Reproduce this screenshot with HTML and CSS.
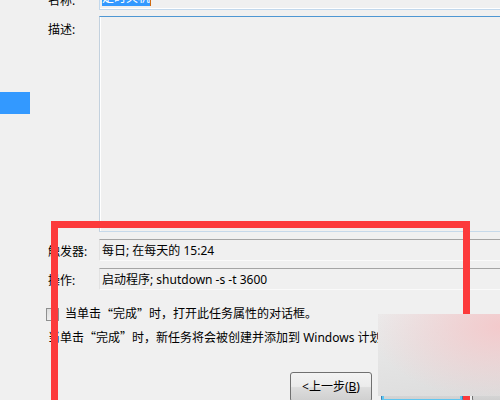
FILE: index.html
```html
<!DOCTYPE html>
<html>

<head>
    <title>创建基本任务向导 - 完成</title>
    <link rel="stylesheet" href="styles.css">
    <meta name="viewport" content="width=device-width, initial-scale=1">
</head>

<body>
    <div class="wizard">
        <nav class="steps">
            <div class="step current"></div>
        </nav>
        <main class="form">
            <div class="row name-row">
                <label class="label">名称:</label>
                <div class="field name-field"><span class="selected">定时关机</span><span class="caret"></span></div>
            </div>
            <div class="row desc-row">
                <label class="label">描述:</label>
                <div class="field textarea"></div>
            </div>
            <div class="row info-row">
                <label class="label">触发器:</label>
                <div class="field readonly">每日; 在每天的 15:24</div>
            </div>
            <div class="row info-row">
                <label class="label">操作:</label>
                <div class="field readonly">启动程序; shutdown -s -t 3600</div>
            </div>
            <label class="check"><span class="box"></span>当单击<span class="cjk">“</span>完成<span class="cjk">”</span>时，打开此任务属性的对话框。</label>
            <p class="note">当单击<span class="cjk">“</span>完成<span class="cjk">”</span>时，新任务将会被创建并添加到 Windows 计划程序中。</p>
            <div class="buttons">
                <button class="btn">&lt;上一步(<u>B</u>)</button>
                <button class="btn default">完成(<u>F</u>)</button>
                <button class="btn">取消</button>
            </div>
        </main>
    </div>
    <div class="annotation"></div>
    <div class="watermark"></div>
</body>

</html>
```

FILE: styles.css
```css
html,
body {
    margin: 0;
    width: 500px;
    height: 400px;
    overflow: hidden;
    background: #f0f0f0;
}

body {
    position: relative;
    font-family: "Noto Sans", "Noto Sans CJK SC", sans-serif;
    font-size: 12px;
    line-height: 16px;
    color: #000;
}

/* full-width quotes, as the CJK face draws them */
.cjk {
    font-family: "Noto Sans CJK SC", sans-serif;
}

.wizard {
    display: flex;
}

.steps {
    width: 30px;
    flex-shrink: 0;
}

.step.current {
    margin-top: 92px;
    height: 22px;
    background: #3399ff;
}

.form {
    margin-left: 18px;
    margin-top: -14px;
    width: 560px;
    display: flex;
    flex-direction: column;
}

.row {
    display: flex;
}

.label {
    width: 51px;
    flex-shrink: 0;
}

.field {
    flex: 1;
    box-sizing: border-box;
    padding: 3px 2px;
}

.name-row .label {
    padding-top: 7px;
}

.name-field {
    height: 24px;
    border: 1px solid #c2d8ec;
    border-top-color: #9fbcd8;
    box-shadow: inset 0 -1px #ffffff;
}

.selected {
    background: #3399ff;
    color: #fff;
}

.caret {
    display: inline-block;
    width: 1px;
    height: 16px;
    vertical-align: top;
    background: #d06a10;
}

.desc-row {
    margin-top: 6px;
}

.desc-row .label {
    padding-top: 6px;
}

.textarea {
    height: 216px;
    border: 1px solid #c6d9ea;
    border-top-color: #4f97d3;
    border-left-color: #c3d1de;
    box-shadow: inset 1px 0 #ffffff;
}

.info-row {
    margin-top: 7px;
}

.info-row .label {
    padding-top: 5px;
}

.readonly {
    height: 22px;
    border-top: 1px solid #a5a5a5;
    border-left: 1px solid #e2e2e2;
    border-bottom: 1px solid #fafafa;
}

.check {
    margin-top: 16px;
    margin-left: -2px;
    display: flex;
    align-items: center;
}

.box {
    width: 11px;
    height: 11px;
    margin-right: 6px;
    border: 1px solid #8e8f8f;
    background: linear-gradient(135deg, #dcdcdc, #fbfbfb);
}

.note {
    margin: 7px 0 0;
}

.buttons {
    margin-top: 26px;
    padding-left: 242px;
    display: flex;
    gap: 9px;
}

.btn {
    width: 82px;
    height: 30px;
    padding: 0;
    border: 1px solid #707070;
    border-radius: 3px;
    font: inherit;
    color: #000;
    background: linear-gradient(#f3f3f3 0%, #ebebeb 48%, #dddddd 52%, #cfcfcf 100%);
}

.btn.default {
    border-color: #3c7fb1;
    box-shadow: inset 0 0 0 2px #5fc6f0;
}

.annotation {
    position: absolute;
    left: 51px;
    top: 221px;
    width: 419px;
    height: 220px;
    box-sizing: border-box;
    border: 7px solid #fc3a3b;
}

.watermark {
    position: absolute;
    left: 378px;
    top: 314px;
    width: 124px;
    height: 82px;
    background:
        radial-gradient(ellipse at 100% 15%, rgba(244, 200, 202, 0.95), rgba(244, 200, 202, 0) 75%),
        linear-gradient(170deg, #ebebeb, #dcdcdc);
}
```
